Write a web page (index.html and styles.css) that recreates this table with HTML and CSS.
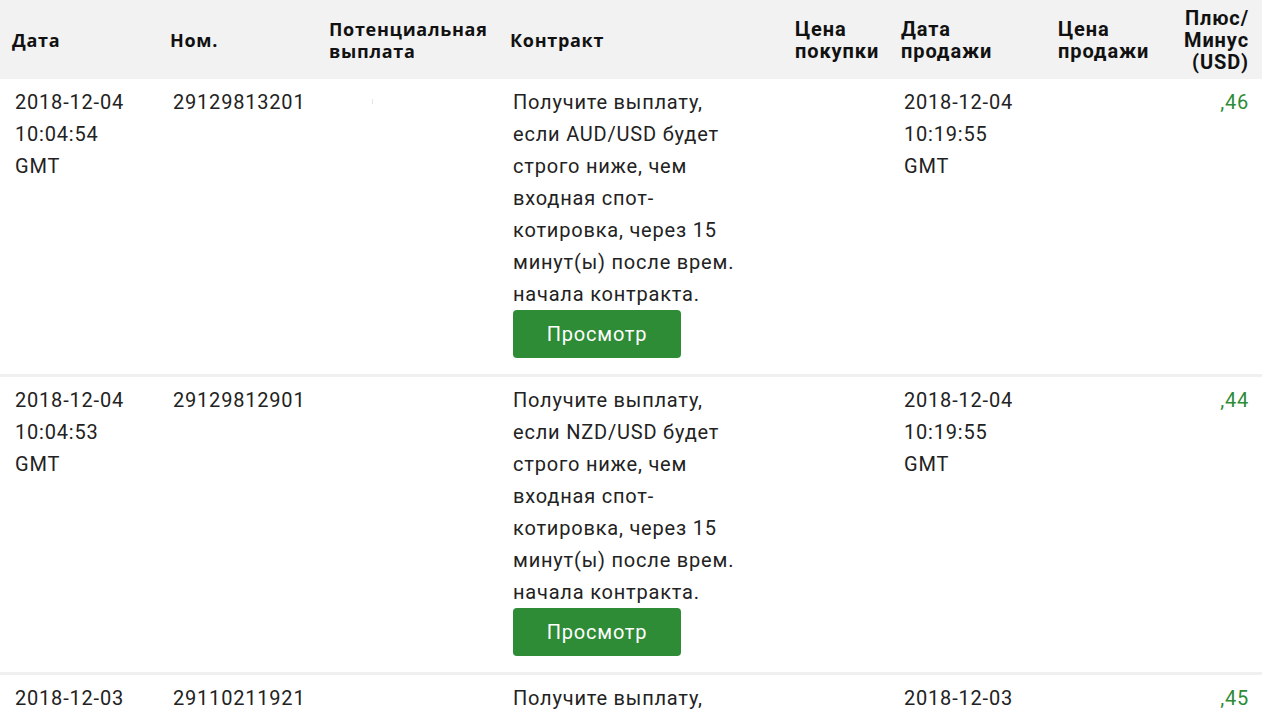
FILE: index.html
```html
<!DOCTYPE html>
<html lang="ru">
<head>
<meta charset="utf-8">
<title>Отчёт</title>
<link rel="stylesheet" href="styles.css">
</head>
<body>
<table class="stmt">
  <colgroup>
    <col class="c-date"><col class="c-ref"><col class="c-payout"><col class="c-contract"><col class="c-buy"><col class="c-selldate"><col class="c-sell"><col class="c-pl">
  </colgroup>
  <thead>
    <tr>
      <th class="h-os">Дата</th>
      <th class="h-os">Ном.</th>
      <th class="h-os">Потенциальная выплата</th>
      <th class="h-os">Контракт</th>
      <th>Цена покупки</th>
      <th>Дата продажи</th>
      <th>Цена продажи</th>
      <th class="num">Плюс/ Минус (USD)</th>
    </tr>
  </thead>
  <tbody>
    <tr>
      <td>2018-12-04<br>10:04:54<br>GMT</td>
      <td>29129813201</td>
      <td><span class="ghost"></span></td>
      <td><div class="desc">Получите выплату, если AUD/USD будет строго ниже, чем входная спот-котировка, через 15 минут(ы) после врем. начала контракта.</div><button class="view">Просмотр</button></td>
      <td></td>
      <td>2018-12-04<br>10:19:55<br>GMT</td>
      <td></td>
      <td class="num profit">,46</td>
    </tr>
    <tr>
      <td>2018-12-04<br>10:04:53<br>GMT</td>
      <td>29129812901</td>
      <td></td>
      <td><div class="desc">Получите выплату, если NZD/USD будет строго ниже, чем входная спот-котировка, через 15 минут(ы) после врем. начала контракта.</div><button class="view">Просмотр</button></td>
      <td></td>
      <td>2018-12-04<br>10:19:55<br>GMT</td>
      <td></td>
      <td class="num profit">,44</td>
    </tr>
    <tr>
      <td>2018-12-03<br>16:42:10<br>GMT</td>
      <td>29110211921</td>
      <td></td>
      <td><div class="desc">Получите выплату, если EUR/USD будет строго ниже, чем входная спот-котировка, через 15 минут(ы) после врем. начала контракта.</div><button class="view">Просмотр</button></td>
      <td></td>
      <td>2018-12-03<br>16:57:11<br>GMT</td>
      <td></td>
      <td class="num profit">,45</td>
    </tr>
  </tbody>
</table>
</body>
</html>
```
FILE: styles.css
```css
html, body {
  margin: 0;
  padding: 0;
  background: #ffffff;
}
body {
  font-family: Roboto, "Liberation Sans", sans-serif;
  color: #222222;
}
.stmt {
  width: 1262px;
  border-collapse: collapse;
  table-layout: fixed;
}
.c-date { width: 158px; }
.c-ref { width: 159px; }
.c-payout { width: 181px; }
.c-contract { width: 285px; }
.c-buy { width: 106px; }
.c-selldate { width: 157px; }
.c-sell { width: 124px; }
.c-pl { width: 92px; }

.stmt thead tr {
  background: #f2f2f2;
  height: 79px;
}
.stmt th {
  font-family: Roboto, "Liberation Sans", sans-serif;
  font-weight: 700;
  font-size: 20px;
  letter-spacing: 0.9px;
  line-height: 22px;
  text-align: left;
  vertical-align: middle;
  padding: 0 2px 0 12px;
  color: #111111;
}
.stmt th.h-os {
  font-family: "Open Sans", "Liberation Sans", sans-serif;
  font-size: 18px;
  letter-spacing: 0.7px;
}
.stmt th.num {
  text-align: right;
  padding-right: 13px;
  padding-left: 4px;
}
.stmt tbody tr {
  border-top: 3px solid #f0f0f0;
}
.stmt tbody tr:first-child {
  border-top: none;
}
.stmt td {
  font-size: 20px;
  letter-spacing: 0.8px;
  line-height: 32px;
  vertical-align: top;
  padding: 7px 8px 16px 15px;
}
.stmt td.num {
  text-align: right;
  padding-right: 13px;
}
.profit {
  color: #2e8b36;
}
.desc {
  width: 232px;
}
.view {
  display: block;
  width: 168px;
  height: 48px;
  margin: 0;
  padding: 0;
  border: none;
  border-radius: 4px;
  background: #2e8b36;
  color: #ffffff;
  font-family: Roboto, "Liberation Sans", sans-serif;
  font-size: 20px;
  letter-spacing: 0.8px;
  cursor: pointer;
}
.ghost {
  display: inline-block;
  width: 1px;
  height: 5px;
  margin-left: 40px;
  margin-top: 13px;
  background: #e4e4e4;
  vertical-align: top;
}
```
